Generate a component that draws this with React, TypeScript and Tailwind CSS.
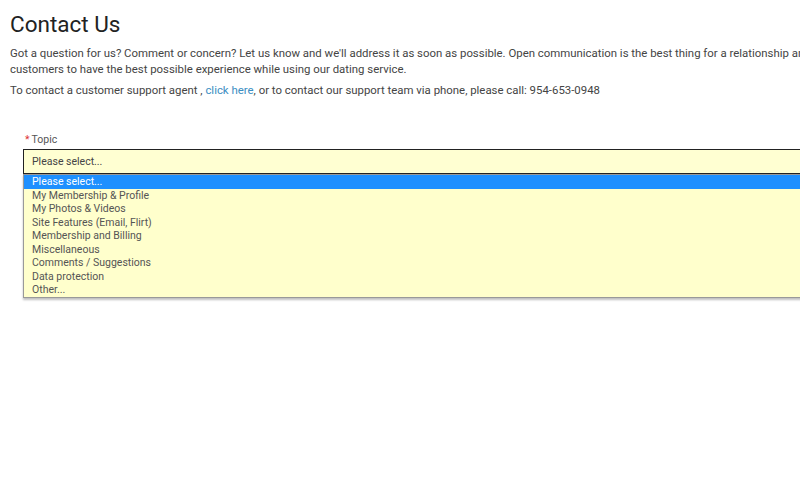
import React from 'react';

const topics = [
  'Please select...',
  'My Membership & Profile',
  'My Photos & Videos',
  'Site Features (Email, Flirt)',
  'Membership and Billing',
  'Miscellaneous',
  'Comments / Suggestions',
  'Data protection',
  'Other...',
];

export default function App() {
  return (
    <div className="w-screen h-[500px] overflow-hidden bg-white font-['Roboto',sans-serif]">
      <div className="w-[1000px] px-[10px] pt-[9px]">
        <h1 className="text-[22.5px] leading-[30px] text-[#222]">Contact Us</h1>

        <div className="w-[900px] mt-[6px] text-[11.4px] leading-[16px] text-[#444]">
          <p>
            Got a question for us? Comment or concern? Let us know and we'll address it as soon as possible. Open
            communication is the best thing for a relationship and we want our customers to have the best possible
            experience while using our dating service.
          </p>
          <p className="mt-[5px]">
            To contact a customer support agent ,{' '}
            <a href="#" className="text-[#3b8ec2]">
              click here
            </a>
            , or to contact our support team via phone, please call: 954-653-0948
          </p>
        </div>

        {/* topic field with its list dropped open */}
        <div className="mt-[35px] pl-[13px]">
          <label className="flex items-center gap-[2px] pl-[2px] text-[10.5px] leading-[14px] text-[#555]">
            <span className="text-[#d33]">*</span>
            Topic
          </label>
          <div className="relative mt-[2px] w-[960px]">
            <div className="h-[25px] flex items-center pl-[8px] border border-[#222] bg-[#ffffd2] text-[10.5px] text-[#444]">
              Please select...
            </div>
            <ul className="absolute left-0 right-0 top-[25px] border border-[#999] bg-[#ffffcc] shadow-[0_2px_2px_rgba(0,0,0,0.25)] text-[10.5px] leading-[13.5px] text-[#555]">
              {topics.map((t, i) => (
                <li key={t} className={i === 0 ? 'pl-[8px] bg-[#1e90ff] text-white' : 'pl-[8px]'}>
                  {t}
                </li>
              ))}
            </ul>
          </div>
        </div>
      </div>
    </div>
  );
}
